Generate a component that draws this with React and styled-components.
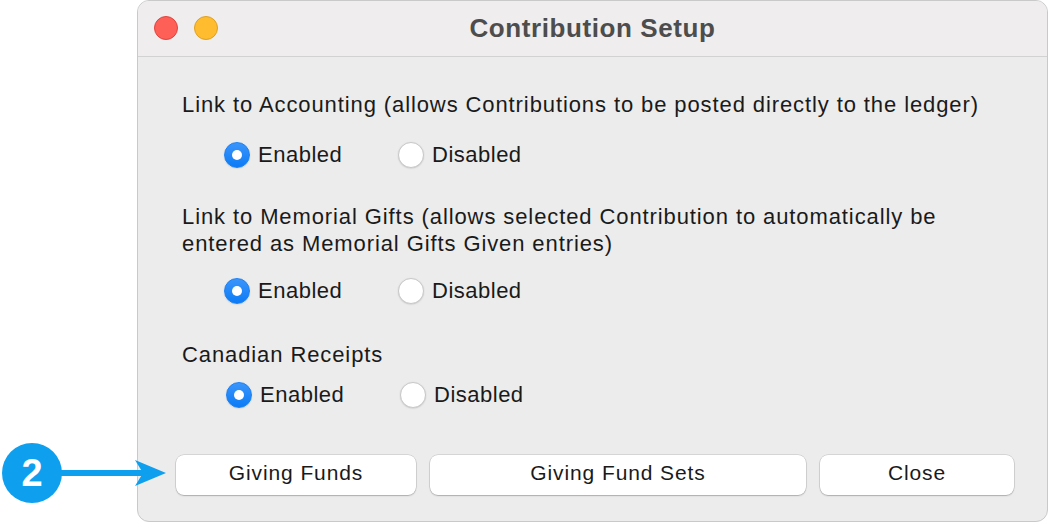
import React from 'react'
import styled, { createGlobalStyle } from 'styled-components'

const GlobalStyle = createGlobalStyle`
  html, body {
    margin: 0;
    padding: 0;
    background: #ffffff;
    font-family: "Liberation Sans", Arial, sans-serif;
  }
`

const Page = styled.div`
  position: relative;
  width: 1050px;
  height: 524px;
  overflow: hidden;
  background: #ffffff;
`

const Window = styled.div`
  margin-left: 137px;
  width: 911px;
  height: 522px;
  border-radius: 12px;
  overflow: hidden;
  border: 1px solid #c9c9c9;
  box-sizing: border-box;
  display: flex;
  flex-direction: column;
  background: #ececec;
`

const TitleBar = styled.div`
  position: relative;
  height: 56px;
  flex: none;
  display: flex;
  align-items: center;
  justify-content: center;
  background: #efedee;
  border-bottom: 1px solid #d2d2d2;
  box-sizing: border-box;
`

const Lights = styled.div`
  position: absolute;
  left: 16px;
  top: 15px;
  display: flex;
  gap: 16px;
`

const Light = styled.span`
  width: 24px;
  height: 24px;
  border-radius: 50%;
  box-sizing: border-box;
  background: ${p => p.color};
  border: 1px solid ${p => p.edge};
`

const Title = styled.div`
  font-size: 26px;
  font-weight: 700;
  color: #4d4d4d;
  letter-spacing: 0.6px;
`

const Body = styled.div`
  flex: 1;
  display: flex;
  flex-direction: column;
  padding-top: 34px;
`

const Section = styled.div`
  display: flex;
  flex-direction: column;
  gap: ${p => p.gap}px;
  margin-top: ${p => p.top || 0}px;
  padding-left: 44px;
`

const Heading = styled.div`
  font-size: 22px;
  line-height: 27px;
  letter-spacing: 0.9px;
  color: #1a1a1a;
  max-width: ${p => p.max || 820}px;
  white-space: ${p => (p.max ? 'normal' : 'nowrap')};
`

const RadioRow = styled.div`
  display: flex;
  align-items: center;
  height: 27px;
  padding-left: ${p => p.indent}px;
`

const Option = styled.label`
  display: flex;
  align-items: center;
  gap: 8px;
  width: ${p => (p.wide ? '174px' : 'auto')};
  font-size: 22px;
  letter-spacing: 0.5px;
  color: #1a1a1a;
`

const Radio = styled.span`
  width: 26px;
  height: 26px;
  border-radius: 50%;
  box-sizing: border-box;
  display: flex;
  align-items: center;
  justify-content: center;
  background: ${p => (p.on ? 'linear-gradient(#3b95fb, #0b7bf6)' : '#ffffff')};
  border: 1px solid ${p => (p.on ? '#1a80f5' : '#c8c8c8')};
  box-shadow: 0 0.5px 1.5px rgba(0, 0, 0, 0.15);
  &::after {
    content: '';
    display: ${p => (p.on ? 'block' : 'none')};
    width: 10px;
    height: 10px;
    border-radius: 50%;
    background: #ffffff;
  }
`

const ButtonRow = styled.div`
  display: flex;
  gap: 14px;
  padding-left: 38px;
  margin-top: 47px;
`

const Button = styled.button`
  width: ${p => p.w}px;
  height: 40px;
  border-radius: 8px;
  border: none;
  background: #ffffff;
  box-shadow: 0 0 0 0.5px rgba(0, 0, 0, 0.18), 0 1px 1.5px rgba(0, 0, 0, 0.2);
  font-family: "Liberation Sans", Arial, sans-serif;
  font-size: 21px;
  letter-spacing: 0.9px;
  color: #1a1a1a;
  padding: 0 0 4px;
`

const Badge = styled.div`
  position: absolute;
  left: 2px;
  top: 443px;
  width: 60px;
  height: 60px;
  border-radius: 50%;
  background: #0ea0ef;
  color: #ffffff;
  font-size: 38px;
  font-weight: 700;
  display: flex;
  align-items: center;
  justify-content: center;
`

const Arrow = styled.svg`
  position: absolute;
  left: 56px;
  top: 457px;
`

const RadioGroup = ({ indent, selected }) => (
  <RadioRow indent={indent}>
    <Option wide>
      <Radio on={selected === 'enabled'} />
      Enabled
    </Option>
    <Option>
      <Radio on={selected === 'disabled'} />
      Disabled
    </Option>
  </RadioRow>
)

const App = () => (
  <Page>
    <GlobalStyle />
    <Window>
      <TitleBar>
        <Lights>
          <Light color="#fe5f57" edge="#e0443e" />
          <Light color="#febc2e" edge="#dea123" />
        </Lights>
        <Title>Contribution Setup</Title>
      </TitleBar>
      <Body>
        <Section gap={23}>
          <Heading>Link to Accounting (allows Contributions to be posted directly to the ledger)</Heading>
          <RadioGroup indent={42} selected="enabled" />
        </Section>
        <Section gap={20} top={35}>
          <Heading max={770}>Link to Memorial Gifts (allows selected Contribution to automatically be entered as Memorial Gifts Given entries)</Heading>
          <RadioGroup indent={42} selected="enabled" />
        </Section>
        <Section gap={13} top={37}>
          <Heading>Canadian Receipts</Heading>
          <RadioGroup indent={44} selected="enabled" />
        </Section>
        <ButtonRow>
          <Button w={240}>Giving Funds</Button>
          <Button w={376}>Giving Fund Sets</Button>
          <Button w={194}>Close</Button>
        </ButtonRow>
      </Body>
    </Window>
    <Badge>2</Badge>
    <Arrow width="112" height="32" viewBox="0 0 112 32">
      <line x1="0" y1="16" x2="90" y2="16" stroke="#0ea0ef" strokeWidth="6" />
      <path d="M 79 3 L 110 16 L 79 29 L 87 16 Z" fill="#0ea0ef" />
    </Arrow>
  </Page>
)

export default App
